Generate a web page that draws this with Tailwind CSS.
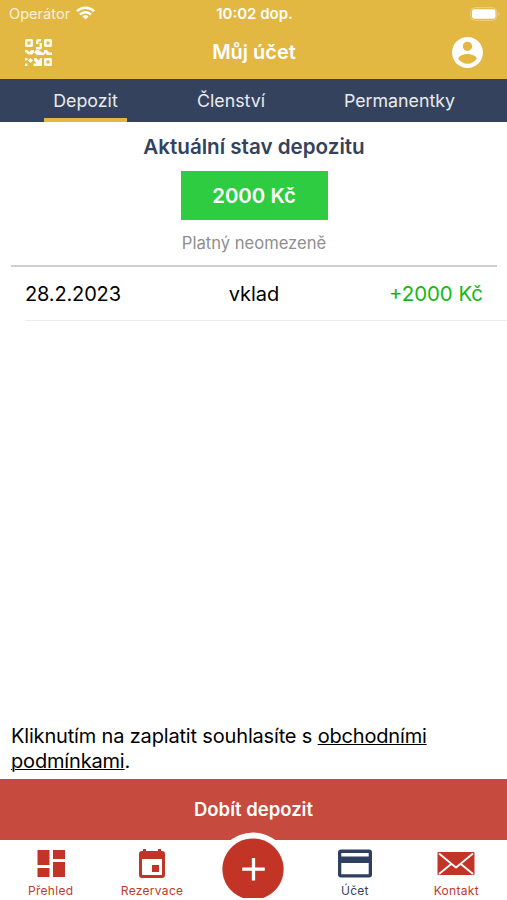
<!DOCTYPE html>
<html lang="cs">
  <head>
    <meta charset="UTF-8" />
    <meta name="viewport" content="width=device-width, initial-scale=1.0" />
    <title>Můj účet</title>
    <script src="https://cdn.jsdelivr.net/npm/@tailwindcss/browser@4"></script>
  </head>
  <body class="h-[900px] flex flex-col overflow-hidden bg-white text-black font-['Inter',sans-serif]">
    <!-- Header -->
    <header class="h-[79px] shrink-0 bg-[#e2b742] text-white">
      <div class="grid h-[27px] grid-cols-3 items-center pl-[9px] pr-[7px] text-[14px]">
        <div class="flex items-center gap-[6px] text-white/80">
          <span class="pt-[2px] text-[14.6px]">Operátor</span>
          <svg class="h-[14px] w-[19px] text-white" viewBox="0 0 19 14" fill="none" stroke="currentColor" stroke-width="2.5">
            <path d="M1 5.200a12.200 12.200 0 0 1 17 0" />
            <path d="M4 8.600a7.800 7.800 0 0 1 11 0" />
            <path d="M9.500 13.600 6.500 10.500a4.300 4.300 0 0 1 6 0z" fill="currentColor" stroke="none" />
          </svg>
        </div>
        <div class="pt-[2px] text-center text-[15px] font-semibold whitespace-nowrap">10:02 dop.</div>
        <svg class="h-[14px] w-[30px] justify-self-end" viewBox="0 0 30 14">
          <rect x=".7" y=".7" width="26" height="12.600" rx="4" fill="none" stroke="#fff" stroke-opacity=".35" />
          <rect x="2" y="2.200" width="23.500" height="9.600" rx="2.200" fill="#fff" />
          <path d="M28.300 5v4q1.400-.6 1.400-2t-1.400-2z" fill="#fff" fill-opacity=".35" />
        </svg>
      </div>
      <div class="flex h-[50px] items-center justify-between pl-[25px] pr-[24px]">
        <svg class="size-[27px]" viewBox="0 0 27 27" fill="#fff" fill-opacity=".92">
          <path fill-rule="evenodd" d="M1.500 0h5A1.500 1.500 0 0 1 8 1.500v5A1.500 1.500 0 0 1 6.500 8h-5A1.500 1.500 0 0 1 0 6.500v-5A1.500 1.500 0 0 1 1.500 0zM2.500 2.500v3h3v-3z" />
          <path fill-rule="evenodd" d="M20.500 0h5A1.500 1.500 0 0 1 27 1.500v5A1.500 1.500 0 0 1 25.500 8h-5A1.500 1.500 0 0 1 19 6.500v-5A1.500 1.500 0 0 1 20.500 0zM21.500 2.500v3h3v-3z" />
          <path fill-rule="evenodd" d="M20.500 19h5a1.500 1.500 0 0 1 1.500 1.500v5a1.500 1.500 0 0 1-1.500 1.500h-5a1.500 1.500 0 0 1-1.500-1.500v-5a1.500 1.500 0 0 1 1.500-1.500zM21.500 21.500v3h3v-3z" />
          <path d="M12.500 0H16v2.500h-2.500V5H11V2zM14.500 4H17v5l-1.500 1.500H11V8h3.500z" />
          <path d="M0 11h2.500l2 2 2-2H9v2.500L7 15.500H3.500L0 13zM11 11h3l3 2.500h2V11h3l2 2.500h3V16h-5l-1.500-2-1.500 2h-7l-3-2.500z" />
          <path d="M0 19h2.500v2.500H0zM3 21.500 5.500 19 8 21.500 5.500 24zM0 24.500h2.500V27H0zM9 19h2.500l2 2.500 2-2.500H17v8H8.500v-2.500h3L9 21.500z" />
        </svg>
        <h1 class="pl-1 text-[20px] font-semibold">Můj účet</h1>
        <svg class="size-[31px]" viewBox="2 2 20 20" fill="#fff">
          <path d="M12 2C6.480 2 2 6.480 2 12s4.480 10 10 10 10-4.480 10-10S17.520 2 12 2zm0 3c1.660 0 3 1.340 3 3s-1.340 3-3 3-3-1.340-3-3 1.340-3 3-3zm0 14.200c-2.500 0-4.710-1.280-6-3.220.03-1.990 4-3.080 6-3.080 1.990 0 5.970 1.090 6 3.080-1.290 1.940-3.500 3.220-6 3.220z" />
        </svg>
      </div>
    </header>

    <!-- Tabs -->
    <nav class="flex h-[43px] shrink-0 justify-between bg-[#34425d] pl-[44px] pr-[43px] text-[17.800px] text-white/90">
      <a class="flex w-[83px] items-center justify-center border-b-4 border-[#e2b742] pt-1.5">Depozit</a>
      <a class="flex w-[86px] items-center justify-center pt-0.5">Členství</a>
      <a class="flex w-[129px] items-center justify-center pt-0.5">Permanentky</a>
    </nav>

    <!-- Deposit -->
    <main class="flex min-h-0 grow flex-col">
      <section class="ml-[11px] mr-[10px] flex h-[145px] shrink-0 flex-col items-center border-b-2 border-[#cfcfcf] pt-[9px]">
        <h2 class="text-[20.600px] leading-8 font-semibold text-[#34425d]">Aktuální stav depozitu</h2>
        <div class="mt-2 flex h-[49px] w-[147px] items-center justify-center bg-[#2ecc40] pt-0.5 text-[20.400px] font-semibold text-white">2000 Kč</div>
        <p class="mt-[11px] text-[16.600px] leading-6 text-[#8e8e8e]">Platný neomezeně</p>
      </section>
      <div class="ml-[25px] grid h-[54px] shrink-0 grid-cols-3 items-center border-b border-[#ededed] pr-[24px] text-[20px]">
        <span class="tracking-[-0.15px]">28.2.2023</span>
        <span class="text-center">vklad</span>
        <span class="pt-0.5 text-right text-[20.400px] text-[#14b814]">+2000 Kč</span>
      </div>
      <p class="mt-auto px-[11px] pb-[5px] text-[20px] leading-[25px] tracking-[-0.17px]">
        Kliknutím na zaplatit souhlasíte s <a class="underline decoration-1">obchodními podmínkami</a>.
      </p>
    </main>
    <button class="h-[61px] shrink-0 bg-[#c64a3d] text-[18.500px] font-semibold text-white">Dobít depozit</button>

    <!-- Bottom bar -->
    <nav class="relative grid h-[60px] shrink-0 grid-cols-5 bg-white text-[12px] tracking-[0.3px] text-[#c0392b]">
      <a class="flex flex-col items-center">
        <svg class="mt-2 h-[32px] w-[36px]" viewBox="0 0 36 32" fill="#c23526">
          <path d="M4.500 2h12v15h-12zM20 2h12v9H20zM4.500 20h12v9h-12zM20 14h12v15H20z" />
        </svg>
        <span class="leading-4 mt-[3px]">Přehled</span>
      </a>
      <a class="flex flex-col items-center">
        <svg class="mt-2 h-[32px] w-[36px]" viewBox="0 0 36 32" fill="#c23526">
          <path fill-rule="evenodd" d="M9 1h3v2h12V1h3v2h1q3 0 3 3v21q0 3-3 3H8q-3 0-3-3V6q0-3 3-3h1zM8 11v16h20V11z" />
          <path d="M18 17h7v7h-7z" />
        </svg>
        <span class="leading-4 mt-[3px]">Rezervace</span>
      </a>
      <a class="relative">
        <svg class="absolute -top-2 left-1/2 h-[68px] w-[74px] -translate-x-1/2" viewBox="0 0 74 68">
          <circle cx="37" cy="37" r="36.500" fill="#fff" />
          <path d="M26.900 66a30.600 30.600 0 1 1 20.200 0z" fill="#c23526" />
          <path d="M37.500 26v22.500M26.200 37.200h22.600" stroke="#fff" stroke-width="3.300" />
        </svg>
      </a>
      <a class="flex flex-col items-center text-[#34425d]">
        <svg class="mt-2 h-[32px] w-[36px]" viewBox="0 0 36 32" fill="#2e3f60">
          <path fill-rule="evenodd" d="M4 1.500h28q3 0 3 3v22q0 3-3 3H4q-3 0-3-3v-22q0-3 3-3zM4.300 5v3.500h27.400V5zM4.300 15v11.300h27.400V15z" />
        </svg>
        <span class="leading-4 mt-[3px]">Účet</span>
      </a>
      <a class="flex flex-col items-center">
        <svg class="mt-2 h-[32px] w-[38px]" viewBox="0 0 38 32">
          <rect x=".5" y="4" width="37" height="23" rx="1" fill="#c23526" />
          <path d="M2 5.500 16.500 17.500 19 19.500 21.500 17.500 36 5.500M2 26 14.500 15.800M36 26 23.500 15.800" fill="none" stroke="#fff" stroke-width="1.800" />
        </svg>
        <span class="leading-4 mt-[3px]">Kontakt</span>
      </a>
    </nav>
  </body>
</html>
